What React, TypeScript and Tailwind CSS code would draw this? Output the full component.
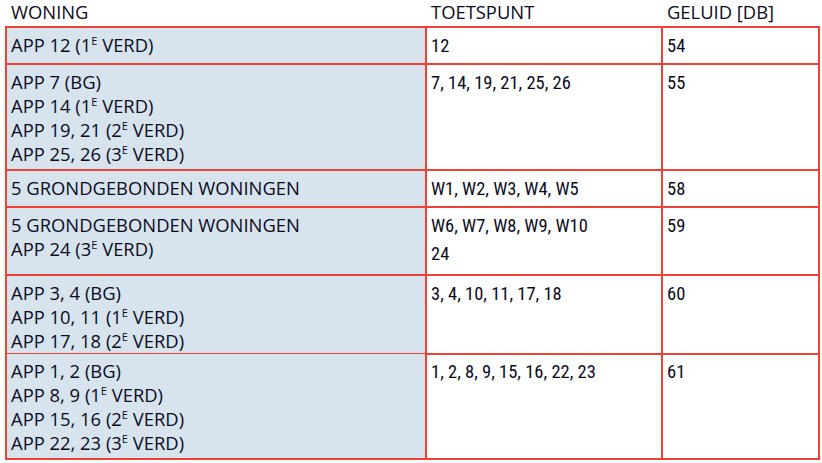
import React from "react";

const RED = "border-[#ef4136]";
const NARROW = "font-['Liberation_Sans_Narrow','Roboto_Condensed','Liberation_Sans',sans-serif] text-[18.5px] leading-7";

function Sup({ children }: { children: React.ReactNode }) {
  return <span className="relative -top-[7px] text-[11px] leading-none">{children}</span>;
}

function Verd({ n }: { n: string }) {
  return (
    <>
      {n}
      <Sup>E</Sup> VERD
    </>
  );
}

type Row = {
  height: string;
  woning: React.ReactNode[];
  toets: React.ReactNode[];
  db: string;
};

const rows: Row[] = [
  { height: "h-[37px]", woning: [<>APP 12 (<Verd n="1" />)</>], toets: ["12"], db: "54" },
  {
    height: "h-[106px]",
    woning: [
      "APP 7 (BG)",
      <>APP 14 (<Verd n="1" />)</>,
      <>APP 19, 21 (<Verd n="2" />)</>,
      <>APP 25, 26 (<Verd n="3" />)</>,
    ],
    toets: ["7, 14, 19, 21, 25, 26"],
    db: "55",
  },
  { height: "h-[37px]", woning: ["5 GRONDGEBONDEN WONINGEN"], toets: ["W1, W2, W3, W4, W5"], db: "58" },
  {
    height: "h-[68px]",
    woning: ["5 GRONDGEBONDEN WONINGEN", <>APP 24 (<Verd n="3" />)</>],
    toets: ["W6, W7, W8, W9, W10", "24"],
    db: "59",
  },
  {
    height: "h-[78px]",
    woning: [
      "APP 3, 4 (BG)",
      <>APP 10, 11 (<Verd n="1" />)</>,
      <>APP 17, 18 (<Verd n="2" />)</>,
    ],
    toets: ["3, 4, 10, 11, 17, 18"],
    db: "60",
  },
  {
    height: "h-[106px]",
    woning: [
      "APP 1, 2 (BG)",
      <>APP 8, 9 (<Verd n="1" />)</>,
      <>APP 15, 16 (<Verd n="2" />)</>,
      <>APP 22, 23 (<Verd n="3" />)</>,
    ],
    toets: ["1, 2, 8, 9, 15, 16, 22, 23"],
    db: "61",
  },
];

export default function App() {
  return (
    <div className="w-[822px] h-[463px] bg-white text-[#0b0b1e] font-['Open_Sans','Liberation_Sans',sans-serif] text-[18.4px] leading-6">
      {/* header row */}
      <div className="grid grid-cols-[422px_236px_157px] ml-[5px] h-[26px]">
        <div className="pl-[6px]">WONING</div>
        <div className="pl-[4px]">TOETSPUNT</div>
        <div className="pl-[4px]">GELUID [DB]</div>
      </div>

      <div className={`ml-[5px] w-[815px] border-l-2 border-t-2 ${RED}`}>
        {rows.map((r, i) => (
          <div key={i} className={`grid grid-cols-[420px_236px_157px] ${r.height}`}>
            <div className={`bg-[#d7e4ee] border-r-2 border-b-2 ${RED} pl-[4px] pt-[5px] whitespace-nowrap`}>
              {r.woning.map((w, j) => (
                <div key={j}>{w}</div>
              ))}
            </div>
            <div className={`border-r-2 border-b-2 ${RED} pl-[4px] pt-[4px] ${NARROW}`}>
              {r.toets.map((t, j) => (
                <div key={j}>{t}</div>
              ))}
            </div>
            <div className={`border-r-2 border-b-2 ${RED} pl-[4px] pt-[4px] ${NARROW}`}>
              {r.db}
            </div>
          </div>
        ))}
      </div>
    </div>
  );
}
